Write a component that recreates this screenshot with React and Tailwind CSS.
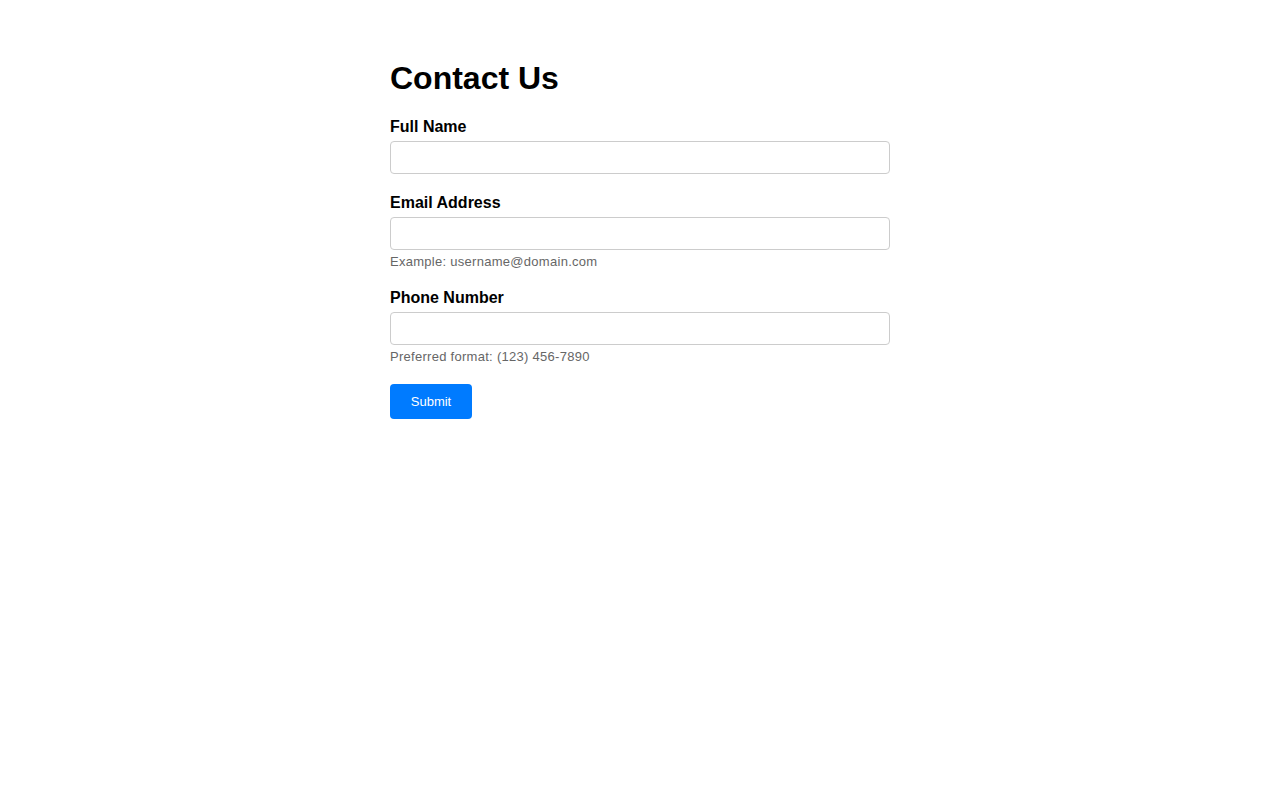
export default function App() {
  return (
    <div className="min-h-screen bg-white font-['Liberation_Sans',Arial,sans-serif] text-black">
      <div className="w-[500px] mx-auto pt-[60px]">
        <h1 className="text-[32px] font-bold leading-[37px] mb-[20px]">Contact Us</h1>
        <form onSubmit={(e) => e.preventDefault()}>
          <Field label="Full Name" id="name" type="text" />
          <Field label="Email Address" id="email" type="email" hint="Example: username@domain.com" />
          <Field label="Phone Number" id="phone" type="tel" hint="Preferred format: (123) 456-7890" />
          <button
            type="submit"
            className="mt-[1px] bg-[#007bff] text-white text-[13px] leading-[15px] px-[20px] py-[10px] rounded-[4px] w-[82px] h-[35px]"
          >
            Submit
          </button>
        </form>
      </div>
    </div>
  );
}

function Field({ label, id, type, hint }) {
  return (
    <div className={hint ? "mb-[18px]" : "mb-[19px]"}>
      <label htmlFor={id} className="block font-bold text-[16px] leading-[19px] mb-[5px]">
        {label}
      </label>
      <input
        id={id}
        type={type}
        className="block w-full h-[33px] border border-[#ccc] rounded-[4px] px-2 text-[14px] outline-none"
      />
      {hint && (
        <div className="text-[13px] leading-[16px] tracking-[0.28px] text-[#666] mt-[4px]">{hint}</div>
      )}
    </div>
  );
}
